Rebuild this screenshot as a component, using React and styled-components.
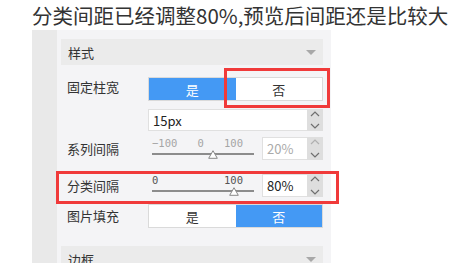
import React from "react";
import styled, { createGlobalStyle } from "styled-components";

const GlobalStyle = createGlobalStyle`
  body {
    margin: 0;
    background: #fff;
    font-family: "Noto Sans CJK SC", "Noto Sans", sans-serif;
  }
`;

const Page = styled.div`
  position: relative;
  width: 457px;
  height: 263px;
  overflow: hidden;
  padding-left: 32px;
  box-sizing: border-box;
`;

const Title = styled.h1`
  margin: 0;
  font-size: 20.5px;
  font-weight: 400;
  line-height: 30px;
  color: #333;
  white-space: nowrap;
`;

const Panel = styled.div`
  display: flex;
  width: 299px;
  height: 240px;
`;

const Rail = styled.div`
  width: 25px;
  background: #e9e9e9;
`;

const Body = styled.div`
  flex: 1;
  background: #f4f4f6;
  padding: 9px 8px 0 4px;
`;

const SectionHead = styled.div`
  height: 26px;
  margin-top: ${(p) => p.$top || 0}px;
  background: #ebebeb;
  display: flex;
  align-items: center;
  justify-content: space-between;
  padding: 0 7px 0 7px;
  font-size: 13px;
  color: #333;
`;

const Caret = styled.span`
  width: 0;
  height: 0;
  border-left: 5px solid transparent;
  border-right: 5px solid transparent;
  border-top: 5px solid #a8a8a8;
`;

const Row = styled.div`
  display: flex;
  align-items: flex-start;
  margin-top: ${(p) => p.$top}px;
  padding-left: 6px;
`;

const Label = styled.div`
  width: 81px;
  flex-shrink: 0;
  font-size: 13px;
  line-height: ${(p) => p.$lh || 20}px;
  color: #333;
`;

const Toggle = styled.div`
  display: flex;
  width: 175px;
  height: 24px;
  border: 1px solid #dadada;
  box-sizing: border-box;
  background: #fff;
`;

const ToggleOption = styled.div`
  flex: 1;
  display: flex;
  align-items: center;
  justify-content: center;
  font-size: 13px;
  color: ${(p) => (p.$on ? "#fff" : "#333")};
  background: ${(p) => (p.$on ? "#4499f4" : "#fff")};
`;

const NumberBox = styled.div`
  display: flex;
  width: ${(p) => p.$width}px;
  height: ${(p) => p.$height || 23}px;
  margin-left: ${(p) => p.$gap || 0}px;
`;

const Field = styled.div`
  flex: 1;
  display: flex;
  align-items: center;
  padding-left: 4px;
  background: #fff;
  border: 1px solid #e0e0e0;
  border-right: none;
  font-size: 13px;
  color: ${(p) => (p.$disabled ? "#aaa" : "#222")};
`;

const Spinner = styled.div`
  width: 16px;
  background: #dedede;
  display: flex;
  flex-direction: column;
  align-items: center;
  justify-content: space-between;
  padding: 2px 0;
  box-sizing: border-box;
`;

const Slider = styled.div`
  position: relative;
  width: 110px;
  height: 23px;
  padding: 0 4px;
  box-sizing: border-box;
`;

const Scale = styled.div`
  display: flex;
  justify-content: space-between;
  padding-right: 11px;
  margin-top: 1px;
  font-family: "DejaVu Sans Mono", monospace;
  font-size: 10.5px;
  line-height: 11px;
  color: ${(p) => (p.$disabled ? "#a5a5a5" : "#555")};
`;

const Track = styled.div`
  height: 1.5px;
  margin-top: 4px;
  background: #8c8c8c;
`;

const Thumb = styled.svg`
  position: absolute;
  top: 13px;
  margin-left: -5px;
`;

const Mark = styled.div`
  position: absolute;
  left: ${(p) => p.$x}px;
  top: ${(p) => p.$y}px;
  width: ${(p) => p.$w}px;
  height: ${(p) => p.$h}px;
  border: 3px solid #f03a3a;
  box-sizing: border-box;
  pointer-events: none;
`;

const Chevron = ({ up, light }) => (
  <svg width="10" height="6" viewBox="0 0 10 6">
    <polyline
      points={up ? "1,5 5,1 9,5" : "1,1 5,5 9,1"}
      fill="none"
      stroke={light ? "#b0b0b0" : "#6f6f6f"}
      strokeWidth="1.2"
    />
  </svg>
);

const NumberInput = ({ value, width, gap, disabled, height }) => (
  <NumberBox $width={width} $gap={gap} $height={height}>
    <Field $disabled={disabled}>{value}</Field>
    <Spinner>
      <Chevron up light={disabled} />
      <Chevron />
    </Spinner>
  </NumberBox>
);

const RangeSlider = ({ min, max, value, ticks, disabled }) => {
  const pct = (value - min) / (max - min);
  return (
    <Slider>
      <Scale $disabled={disabled}>
        {ticks.map((t) => (
          <span key={t}>{t}</span>
        ))}
      </Scale>
      <Track />
      <Thumb width="10" height="9" viewBox="0 0 10 9" style={{ left: 4 + pct * 102 }}>
        <polygon points="5,0.7 9.3,8.3 0.7,8.3" fill="#fff" stroke="#888" strokeWidth="1" />
      </Thumb>
    </Slider>
  );
};

const App = () => {
  return (
    <Page>
      <GlobalStyle />
      <Title>分类间距已经调整80%,预览后间距还是比较大</Title>
      <Panel>
        <Rail />
        <Body>
          <SectionHead>
            <span>样式</span>
            <Caret />
          </SectionHead>
          <Row $top={12}>
            <Label>固定柱宽</Label>
            <Toggle>
              <ToggleOption $on>是</ToggleOption>
              <ToggleOption>否</ToggleOption>
            </Toggle>
          </Row>
          <Row $top={8}>
            <Label />
            <NumberInput value="15px" width={175} height={22} />
          </Row>
          <Row $top={6}>
            <Label $lh={23}>系列间隔</Label>
            <RangeSlider min={-100} max={100} value={20} ticks={["−100", "0", "100"]} disabled />
            <NumberInput value="20%" width={61} gap={4} disabled />
          </Row>
          <Row $top={14}>
            <Label $lh={23}>分类间隔</Label>
            <RangeSlider min={0} max={100} value={80} ticks={["0", "100"]} />
            <NumberInput value="80%" width={61} gap={4} />
          </Row>
          <Row $top={7}>
            <Label $lh={23}>图片填充</Label>
            <Toggle>
              <ToggleOption>是</ToggleOption>
              <ToggleOption $on>否</ToggleOption>
            </Toggle>
          </Row>
          <SectionHead $top={18}>
            <span>边框</span>
            <Caret />
          </SectionHead>
        </Body>
      </Panel>
      <Mark $x={224} $y={68} $w={106} $h={40} />
      <Mark $x={56} $y={171} $w={283} $h={33} />
    </Page>
  );
};

export default App;
